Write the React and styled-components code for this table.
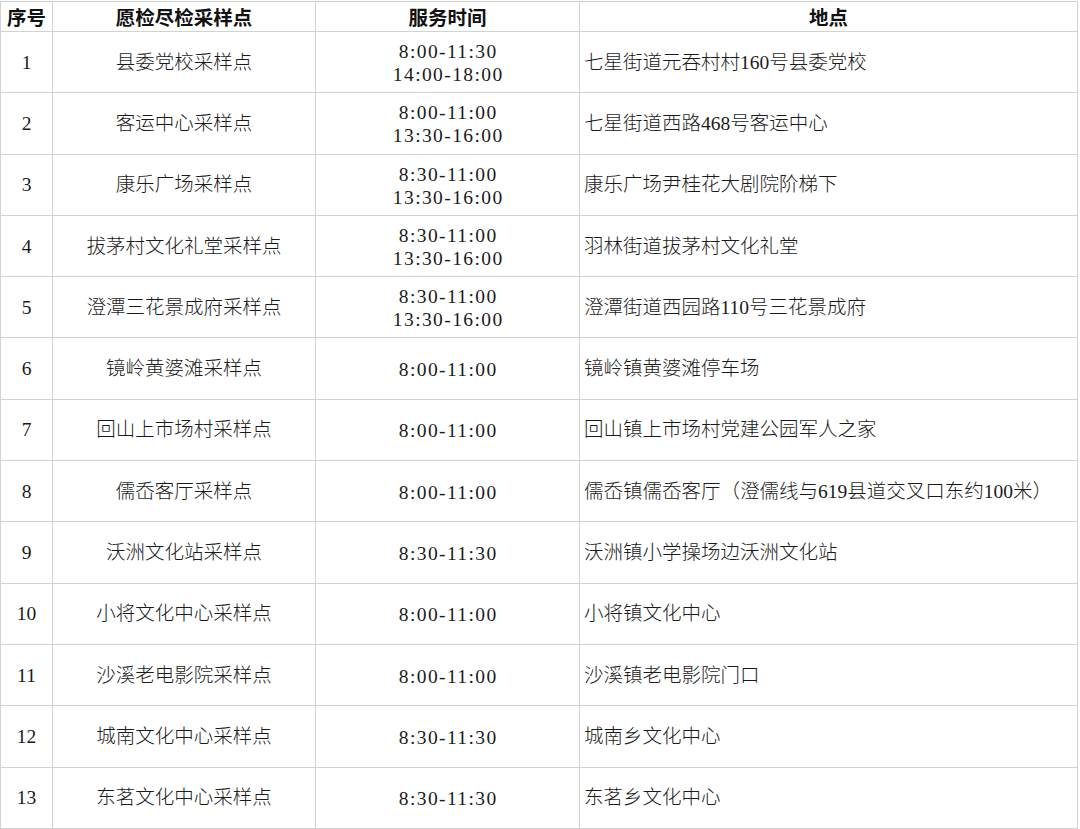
import React from "react";
import styled, { createGlobalStyle } from "styled-components";

const Global = createGlobalStyle`
  html, body { margin: 0; padding: 0; background: #fff; }
  body { font-family: "Liberation Serif", "Noto Sans CJK SC", serif; color: #111; }
`;

const Wrap = styled.div`
  padding-top: 1px;
  width: 1077px;
`;

const Table = styled.table`
  width: 1077px;
  border-collapse: collapse;
  table-layout: fixed;
`;

const Col = styled.col`
  width: ${(p) => p.$w}px;
`;

const HeadRow = styled.tr`
  height: 30px;
`;

const Row = styled.tr`
  height: 61.3px;
`;

const Th = styled.th`
  border: 1px solid #d2d2d2;
  padding: 0;
  font-family: "Noto Sans CJK SC", sans-serif;
  font-weight: 700;
  font-size: 19.5px;
  line-height: 22px;
  color: #111;
  text-align: center;
  vertical-align: middle;
`;

const Td = styled.td`
  border: 1px solid #d2d2d2;
  padding: 0 ${(p) => (p.$left ? "4px" : "0")};
  font-family: "Liberation Serif", "Noto Sans CJK SC", serif;
  font-weight: 300;
  font-size: 19.5px;
  line-height: 23px;
  color: #1a1a1a;
  text-align: ${(p) => (p.$left ? "left" : "center")};
  vertical-align: middle;
  white-space: nowrap;
`;

const Times = styled.div`
  padding-top: 2px;
`;

const Time = styled.div`
  font-family: "Liberation Serif", serif;
  font-weight: 400;
  font-size: 19.5px;
  letter-spacing: 1.4px;
  line-height: 23px;
  padding-left: 1.4px;
`;

const rows = [
  ["1", "县委党校采样点", ["8:00-11:30", "14:00-18:00"], "七星街道元吞村村160号县委党校"],
  ["2", "客运中心采样点", ["8:00-11:00", "13:30-16:00"], "七星街道西路468号客运中心"],
  ["3", "康乐广场采样点", ["8:30-11:00", "13:30-16:00"], "康乐广场尹桂花大剧院阶梯下"],
  ["4", "拔茅村文化礼堂采样点", ["8:30-11:00", "13:30-16:00"], "羽林街道拔茅村文化礼堂"],
  ["5", "澄潭三花景成府采样点", ["8:30-11:00", "13:30-16:00"], "澄潭街道西园路110号三花景成府"],
  ["6", "镜岭黄婆滩采样点", ["8:00-11:00"], "镜岭镇黄婆滩停车场"],
  ["7", "回山上市场村采样点", ["8:00-11:00"], "回山镇上市场村党建公园军人之家"],
  ["8", "儒岙客厅采样点", ["8:00-11:00"], "儒岙镇儒岙客厅（澄儒线与619县道交叉口东约100米）"],
  ["9", "沃洲文化站采样点", ["8:30-11:30"], "沃洲镇小学操场边沃洲文化站"],
  ["10", "小将文化中心采样点", ["8:00-11:00"], "小将镇文化中心"],
  ["11", "沙溪老电影院采样点", ["8:00-11:00"], "沙溪镇老电影院门口"],
  ["12", "城南文化中心采样点", ["8:30-11:30"], "城南乡文化中心"],
  ["13", "东茗文化中心采样点", ["8:30-11:30"], "东茗乡文化中心"],
];

export default function App() {
  return (
    <Wrap>
      <Global />
      <Table>
        <colgroup>
          <Col $w={52} />
          <Col $w={263} />
          <Col $w={264} />
          <Col $w={498} />
        </colgroup>
        <thead>
          <HeadRow>
            <Th>序号</Th>
            <Th>愿检尽检采样点</Th>
            <Th>服务时间</Th>
            <Th>地点</Th>
          </HeadRow>
        </thead>
        <tbody>
          {rows.map(([n, name, times, addr]) => (
            <Row key={n}>
              <Td>{n}</Td>
              <Td>{name}</Td>
              <Td>
                <Times>
                  {times.map((t) => (
                    <Time key={t}>{t}</Time>
                  ))}
                </Times>
              </Td>
              <Td $left>{addr}</Td>
            </Row>
          ))}
        </tbody>
      </Table>
    </Wrap>
  );
}
